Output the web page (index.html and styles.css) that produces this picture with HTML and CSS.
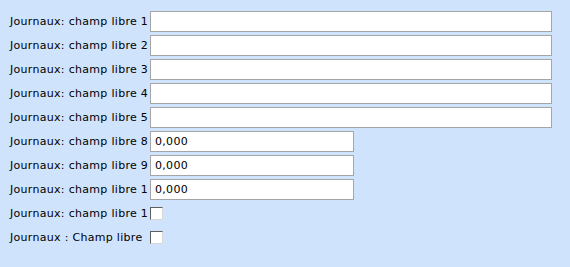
FILE: index.html
```html
<!DOCTYPE html>
<html lang="fr">
<head>
    <meta charset="UTF-8">
    <title>Journaux - champs libres</title>
    <link rel="stylesheet" href="styles.css">
</head>
<body>
    <div class="form">
        <div class="row">
            <label class="lbl">Journaux: champ libre 1</label>
            <input class="field wide" type="text" value="">
        </div>
        <div class="row">
            <label class="lbl">Journaux: champ libre 2</label>
            <input class="field wide" type="text" value="">
        </div>
        <div class="row">
            <label class="lbl">Journaux: champ libre 3</label>
            <input class="field wide" type="text" value="">
        </div>
        <div class="row">
            <label class="lbl">Journaux: champ libre 4</label>
            <input class="field wide" type="text" value="">
        </div>
        <div class="row">
            <label class="lbl">Journaux: champ libre 5</label>
            <input class="field wide" type="text" value="">
        </div>
        <div class="row">
            <label class="lbl">Journaux: champ libre 8</label>
            <input class="field num" type="text" value="0,000">
        </div>
        <div class="row">
            <label class="lbl">Journaux: champ libre 9</label>
            <input class="field num" type="text" value="0,000">
        </div>
        <div class="row">
            <label class="lbl">Journaux: champ libre 1</label>
            <input class="field num" type="text" value="0,000">
        </div>
        <div class="row">
            <label class="lbl">Journaux: champ libre 1</label>
            <input class="check" type="checkbox">
        </div>
        <div class="row">
            <label class="lbl">Journaux : Champ libre</label>
            <input class="check" type="checkbox">
        </div>
    </div>
</body>
</html>
```

FILE: styles.css
```css
body {
    margin: 0;
    background: #cfe3fd;
    font-family: "DejaVu Sans", Verdana, sans-serif;
    font-size: 11px;
    color: #000;
}

.form {
    padding: 11px 0 0 10px;
}

.row {
    display: flex;
    align-items: center;
    height: 21px;
    margin-bottom: 3px;
}

.lbl {
    width: 140px;
    flex-shrink: 0;
    white-space: nowrap;
    letter-spacing: 0.3px;
}

.field {
    box-sizing: border-box;
    height: 21px;
    margin: 0;
    padding: 0 4px;
    border: 1px solid #a5a5a5;
    background: #fff;
    font-family: inherit;
    font-size: 11px;
    letter-spacing: 0.3px;
    color: #000;
    outline: none;
}

.wide { width: 402px; }
.num { width: 204px; }

.check {
    appearance: none;
    -webkit-appearance: none;
    box-sizing: border-box;
    width: 13px;
    height: 13px;
    margin: 0;
    background: #fff;
    border: 1px solid;
    border-color: #5e5e5e #d8d8d8 #d8d8d8 #5e5e5e;
}
```
